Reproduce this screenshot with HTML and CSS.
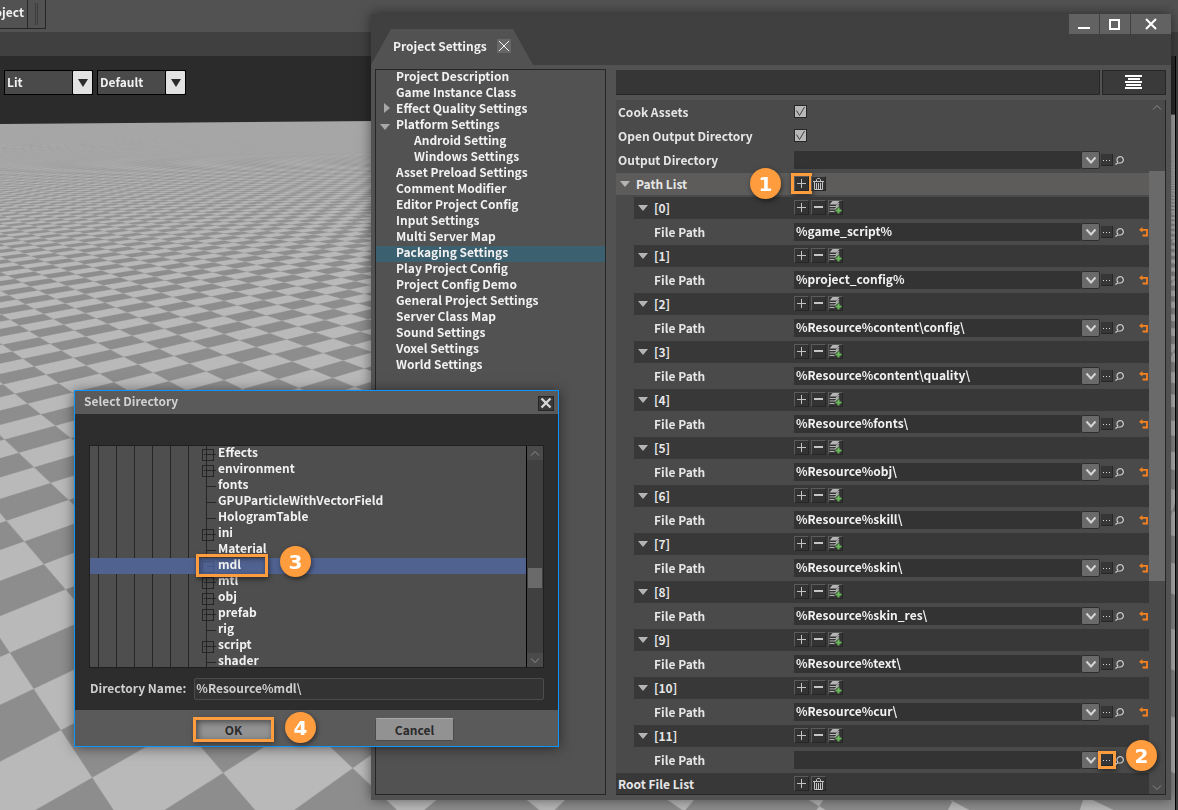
FILE: index.html
```html
<!DOCTYPE html>
<html lang="en">
<head>
  <meta charset="UTF-8">
  <title>Project Settings</title>
  <meta name="viewport" content="width=device-width, initial-scale=1.0">
  <link rel="stylesheet" href="styles.css">
</head>
<body>
  <svg class="sprite" aria-hidden="true">
    <symbol id="i-plus" viewBox="0 0 15 15"><path d="M7.500 3v9M3 7.500h9" stroke="#c4c4c4" fill="none"/></symbol>
    <symbol id="i-minus" viewBox="0 0 15 15"><path d="M3 7h9" stroke="#c4c4c4" stroke-width="2" fill="none"/></symbol>
    <symbol id="i-stack" viewBox="0 0 15 15">
      <path d="M4.500 1h7l-3 3.500H1.500z" fill="#b5b5b5"/>
      <path d="M1.500 6.500h6.500l3-3.500M1.500 9h5.500l4-3.500M1.500 11.500h5" stroke="#b5b5b5" stroke-width="1.200" fill="none"/>
      <path d="M10.500 7.500v6M7.500 10.500h6" stroke="#6cb85c" stroke-width="2" fill="none"/>
    </symbol>
    <symbol id="i-trash" viewBox="0 0 15 15">
      <path d="M2 5.500h11M5.500 5V3.500l1-1h2l1 1V5M3.500 6v7.500h8V6M5.500 7v6M7.500 7v6M9.500 7v6" stroke="#c4c4c4" fill="none"/>
    </symbol>
    <symbol id="i-chevron" viewBox="0 0 18 18"><path d="M4.500 6.500l4.500 5 4.500-5" stroke="#d4d4d4" stroke-width="2" fill="none"/></symbol>
    <symbol id="i-dots" viewBox="0 0 12 12"><path d="M2 6.500h1M5 6.500h1M8 6.500h1" stroke="#d8d8d8" fill="none"/></symbol>
    <symbol id="i-search" viewBox="0 0 10 10"><path d="M3 7.200a3.200 3.200 0 1 1 2.500 .8H2.500L.5 9.500" stroke="#d0d0d0" stroke-width="1.200" fill="none"/></symbol>
    <symbol id="i-reset" viewBox="0 0 9 10"><path d="M2 2.800h6v5.700H3.500" stroke="#f5821f" stroke-width="1.800" fill="none"/><path d="M0 2.800L3.500 0v5.600z" fill="#f5821f"/></symbol>
    <symbol id="i-scroll-up" viewBox="0 0 16 14"><path d="M4 9.500l4-4 4 4" stroke="#8c8c8c" fill="none"/></symbol>
    <symbol id="i-scroll-down" viewBox="0 0 16 14"><path d="M4 5.500l4 4 4-4" stroke="#8c8c8c" fill="none"/></symbol>
  </svg>

  <canvas class="floor" id="floor"></canvas>

  <header class="editor">
    <div class="menu-strip">
      <span class="menu-item">Project</span>
      <span class="grip"></span>
    </div>
    <div class="tab-strip"></div>
    <div class="view-tools">
      <label class="combo">
        <select aria-label="View mode"><option>Lit</option></select>
        <span class="combo-arrow"></span>
      </label>
      <label class="combo">
        <select aria-label="Camera"><option>Default</option></select>
        <span class="combo-arrow"></span>
      </label>
    </div>
  </header>
  <div class="dock-edge"></div>

  <main class="window">
    <div class="titlebar">
      <div class="tab">
        <svg class="tab-shape" viewBox="0 0 162 36" preserveAspectRatio="none"><path d="M0 36L20 0h122l20 36z" fill="#525252"/></svg>
        <span class="tab-title">Project Settings</span>
        <button class="tab-close" aria-label="Close tab"><svg width="14" height="14" viewBox="0 0 14 14"><path d="M2 2l10 10M12 2L2 12" stroke="#f4f4f4"/></svg></button>
      </div>
      <div class="window-buttons">
        <button aria-label="Minimize"><svg width="30" height="20" viewBox="0 0 30 20"><path d="M9 14h12" stroke="#fff" stroke-width="2"/></svg></button>
        <button aria-label="Maximize"><svg width="30" height="20" viewBox="0 0 30 20"><path d="M10 6h9v9h-9z" stroke="#fff" stroke-width="2" fill="none"/></svg></button>
        <button class="wide" aria-label="Close"><svg width="40" height="20" viewBox="0 0 40 20"><path d="M15 5l10 10M25 5L15 15" stroke="#fff" stroke-width="2"/></svg></button>
      </div>
    </div>

    <div class="window-body">
      <ul class="nav">
        <li>Project Description</li>
        <li>Game Instance Class</li>
        <li class="closed">Effect Quality Settings</li>
        <li class="open">Platform Settings</li>
        <li class="child">Android Setting</li>
        <li class="child">Windows Settings</li>
        <li>Asset Preload Settings</li>
        <li>Comment Modifier</li>
        <li>Editor Project Config</li>
        <li>Input Settings</li>
        <li>Multi Server Map</li>
        <li class="selected">Packaging Settings</li>
        <li>Play Project Config</li>
        <li>Project Config Demo</li>
        <li>General Project Settings</li>
        <li>Server Class Map</li>
        <li>Sound Settings</li>
        <li>Voxel Settings</li>
        <li>World Settings</li>
      </ul>

      <section class="details">
        <div class="search-row">
          <input class="search" type="text" aria-label="Search settings">
          <button class="list-btn" aria-label="List options">
            <svg width="18" height="16" viewBox="0 0 18 16"><path d="M0 1h17M3 4h12M0 7h17M1 10h15M0 13h17" stroke="#fff" stroke-width="2"/></svg>
          </button>
        </div>
        <div class="list">
          <div class="rows" id="rows">
            <div class="row">
              <label class="name" for="cook">Cook Assets</label>
              <div class="value"><input class="check" type="checkbox" id="cook" checked></div>
            </div>
            <div class="row">
              <label class="name" for="open-dir">Open Output Directory</label>
              <div class="value"><input class="check" type="checkbox" id="open-dir" checked></div>
            </div>
            <div class="row">
              <label class="name" for="out-dir">Output Directory</label>
              <div class="value">
                <input class="path" type="text" id="out-dir">
                <button class="drop" aria-label="Recent"><svg><use href="#i-chevron"/></svg></button>
                <button class="dots" aria-label="Browse"><svg><use href="#i-dots"/></svg></button>
                <button class="find" aria-label="Find"><svg><use href="#i-search"/></svg></button>
              </div>
            </div>
            <div class="row group">
              <span class="name arrow">Path List</span>
              <div class="value">
                <button class="tool mark" aria-label="Add"><svg><use href="#i-plus"/></svg></button>
                <button class="tool" aria-label="Clear"><svg><use href="#i-trash"/></svg></button>
              </div>
              <span class="badge badge-1">1</span>
            </div>
          </div>
          <div class="scroll">
            <svg class="scroll-arrow"><use href="#i-scroll-up"/></svg>
            <div class="scroll-track"><div class="thumb list-thumb"></div></div>
            <svg class="scroll-arrow"><use href="#i-scroll-down"/></svg>
          </div>
        </div>
      </section>
    </div>
  </main>

  <section class="dialog">
    <div class="dialog-title">
      <span>Select Directory</span>
      <button class="dialog-close" aria-label="Close"><svg width="14" height="14" viewBox="0 0 14 14"><path d="M2.500 2.500l9 9M11.500 2.500l-9 9" stroke="#d8d8d8" stroke-width="2.400"/></svg></button>
    </div>
    <div class="dialog-body">
      <div class="tree">
        <ul class="tree-rows">
          <li class="node">Effects</li>
          <li class="node">environment</li>
          <li>fonts</li>
          <li>GPUParticleWithVectorField</li>
          <li>HologramTable</li>
          <li class="node">ini</li>
          <li>Material</li>
          <li class="node selected">mdl<span class="mark-box"></span><span class="badge badge-3">3</span></li>
          <li class="node">mtl</li>
          <li class="node">obj</li>
          <li class="node">prefab</li>
          <li>rig</li>
          <li class="node">script</li>
          <li>shader</li>
        </ul>
        <div class="scroll">
          <svg class="scroll-arrow"><use href="#i-scroll-up"/></svg>
          <div class="scroll-track"><div class="thumb tree-thumb"></div></div>
          <svg class="scroll-arrow"><use href="#i-scroll-down"/></svg>
        </div>
      </div>
      <div class="dir-row">
        <label for="dir-name">Directory Name:</label>
        <input type="text" id="dir-name" value="%Resource%mdl\">
      </div>
    </div>
    <div class="dialog-footer">
      <button class="btn ok">OK</button>
      <button class="btn">Cancel</button>
      <span class="badge badge-4">4</span>
    </div>
  </section>

  <script src="script.js"></script>
</body>
</html>
```

FILE: styles.css
```css
* {
  box-sizing: border-box;
}
html, body {
  height: 100%;
  margin: 0;
}
body {
  position: relative;
  overflow: hidden;
  background: #2b2b2b;
  color: #f2f2f2;
  font-family: "Noto Sans CJK SC", "Noto Sans", sans-serif;
  font-size: 12px;
  font-weight: 700;
  line-height: 16px;
}
button, input, select {
  font: inherit;
  color: inherit;
  margin: 0;
  padding: 0;
  border: 0;
  border-radius: 0;
}
button {
  display: flex;
  align-items: center;
  justify-content: center;
  flex: none;
}
button svg {
  display: block;
  flex: none;
}
ul {
  list-style: none;
  margin: 0;
  padding: 0;
}
.sprite {
  position: absolute;
  width: 0;
  height: 0;
}
.floor {
  position: absolute;
  top: 0;
  left: 0;
}

/* editor behind the windows */
.editor {
  position: relative;
}
.menu-strip {
  display: flex;
  height: 32px;
  padding-bottom: 3px;
  background: #525252;
}
.menu-item {
  width: 28px;
  padding: 4px 3px 0 0;
  display: flex;
  justify-content: flex-end;
  border-right: 1px solid #262626;
  border-bottom: 1px solid #262626;
}
.grip {
  width: 18px;
  border-right: 1px solid #262626;
  border-bottom: 1px solid #262626;
  background: linear-gradient(90deg, #3c3c3c 1px, transparent 1px 2px, #3c3c3c 2px 3px, transparent 3px) 7px 3px / 10px 22px no-repeat;
}
.tab-strip {
  height: 24px;
  background: #404040;
}
.view-tools {
  display: flex;
  gap: 4px;
  padding: 14px 4px;
}
.combo {
  display: flex;
  height: 25px;
  border: 1px solid #000;
  background: #4a4a4a;
}
.combo select {
  appearance: none;
  width: 68px;
  padding-bottom: 2px;
  padding-left: 2px;
  background: #4a4a4a;
  border-right: 1px solid #000;
}
.combo-arrow {
  display: flex;
  align-items: center;
  justify-content: center;
  width: 19px;
  border-radius: 1px;
  background: #e2e2e2;
}
.combo-arrow::before {
  content: "";
  border: 5px solid transparent;
  border-top: 8px solid #2b2b2b;
  border-bottom: 0;
}
.dock-edge {
  position: absolute;
  top: 56px;
  right: 0;
  bottom: 0;
  width: 3px;
  background: #404040;
  border-left: 1px solid #000;
}

/* settings window */
.window {
  position: absolute;
  top: 14px;
  right: 7px;
  bottom: 10px;
  left: 371px;
  display: flex;
  flex-direction: column;
  background: #525252;
  box-shadow: 0 0 12px rgba(0, 0, 0, 0.5);
}
.titlebar {
  display: flex;
  justify-content: space-between;
  align-items: flex-start;
  height: 51px;
  background: #404040;
}
.tab {
  position: relative;
  display: flex;
  align-items: center;
  align-self: flex-end;
  width: 162px;
  height: 36px;
  padding-bottom: 3px;
  padding-left: 22px;
  gap: 10px;
}
.tab-shape {
  position: absolute;
  inset: 0;
  width: 100%;
  height: 100%;
}
.tab-title, .tab-close {
  position: relative;
}
.tab-close {
  width: 14px;
  height: 14px;
  background: #676767;
}
.window-buttons {
  display: flex;
  gap: 1px;
}
.window-buttons button {
  width: 30px;
  height: 20px;
  background: #626262;
}
.window-buttons .wide {
  width: 40px;
}
.window-body {
  flex: 1;
  min-height: 0;
  display: flex;
  gap: 10px;
  padding: 4px 5px 5px 4px;
}
.nav {
  flex: none;
  width: 231px;
  border: 1px solid #262626;
}
.nav li {
  display: flex;
  align-items: center;
  height: 16px;
  padding-bottom: 4px;
  padding-left: 20px;
}
.nav .child {
  padding-left: 38px;
}
.nav .selected {
  background: #3b6070;
}
.nav .closed::before {
  content: "";
  margin-left: -12px;
  margin-right: 6px;
  border: 5px solid transparent;
  border-left: 6px solid #a8a8a8;
  border-right: 0;
}
.nav .open::before {
  content: "";
  margin-left: -16px;
  margin-right: 6px;
  margin-top: 6px;
  border: 5px solid transparent;
  border-top: 6px solid #a8a8a8;
  border-bottom: 0;
}
.details {
  flex: 1;
  min-width: 0;
  display: flex;
  flex-direction: column;
  gap: 5px;
  padding-top: 1px;
}
.search-row {
  display: flex;
  gap: 2px;
  height: 25px;
}
.search {
  flex: 1;
  min-width: 0;
  background: #363636;
  border-right: 1px solid #262626;
  border-bottom: 1px solid #262626;
}
.list-btn {
  width: 64px;
  background: #3a3a3a;
  border: 1px solid #262626;
}
.list {
  flex: 1;
  min-height: 0;
  display: flex;
  background: #4a4a4a;
  border-right: 1px solid #262626;
  border-bottom: 1px solid #262626;
}
.rows {
  flex: 1;
  min-width: 0;
  padding-top: 1px;
  display: flex;
  flex-direction: column;
  gap: 2px;
}
.row {
  position: relative;
  flex: none;
  display: flex;
  height: 22px;
}
.name {
  flex: none;
  display: flex;
  align-items: center;
  width: 178px;
  padding-left: 2px;
  color: #e6e6e6;
}
.sub {
  margin-left: 18px;
}
.sub .name {
  width: 160px;
  padding-left: 20px;
}
.row .arrow {
  padding-left: 4px;
}
.arrow::before {
  content: "";
  margin-right: 6px;
  border: 5px solid transparent;
  border-top: 6px solid #b4b4b4;
  border-bottom: 0;
}
.group {
  background: #5d5c5a;
}
.index, .root {
  background: #383838;
}
.root {
  height: 21px;
}
.value {
  flex: 1;
  min-width: 0;
  display: flex;
  align-items: center;
  gap: 2px;
  padding-right: 1px;
}
.check {
  appearance: none;
  width: 13px;
  height: 13px;
  margin-bottom: 1px;
  border: 1px solid #262626;
  background: #b8b8b8 url("data:image/svg+xml,%3Csvg xmlns='http://www.w3.org/2000/svg' width='11' height='11'%3E%3Cpath d='M1.500 4.500l3 5 5-8.500' stroke='%23404040' fill='none'/%3E%3C/svg%3E") no-repeat;
}
.path {
  flex: 1;
  min-width: 0;
  height: 18px;
  padding: 0 2px 3px;
  background: #333;
}
.drop {
  width: 19px;
  height: 18px;
  margin-left: -2px;
  background: #6a6a6a;
  border: 1px solid #2e2e2e;
  border-radius: 2px;
}
.drop svg {
  width: 18px;
  height: 18px;
}
.dots {
  width: 12px;
  height: 12px;
  margin-left: -1px;
  background: #363636;
  border-right: 1px solid #262626;
  border-bottom: 1px solid #262626;
}
.dots svg {
  width: 12px;
  height: 12px;
}
.find, .find svg {
  width: 10px;
  height: 10px;
  background: none;
}
.find:last-child {
  margin-right: 23px;
}
.reset {
  width: 9px;
  height: 10px;
  margin-left: 12px;
  background: none;
}
.reset svg {
  width: 9px;
  height: 10px;
}
.tool {
  width: 15px;
  height: 15px;
  margin-bottom: 1px;
  background: #333;
  border: 1px solid #5a5a5a;
  border-right-color: #262626;
  border-bottom-color: #262626;
}
.tool svg {
  width: 15px;
  height: 15px;
}

/* scroll bars */
.scroll {
  flex: none;
  display: flex;
  flex-direction: column;
  width: 16px;
}
.scroll-arrow {
  flex: none;
  width: 16px;
  height: 14px;
}
.scroll-track {
  flex: 1;
}
.thumb {
  background: #6a6a6a;
}
.list-thumb {
  height: 410px;
  margin-top: 57px;
}

/* select directory dialog */
.dialog {
  position: absolute;
  top: 390px;
  left: 74px;
  width: 485px;
  background: #2d2d2d;
  border: 1px solid #0a95ff;
  box-shadow: 0 1px 12px rgba(0, 0, 0, 0.5);
}
.dialog-title {
  display: flex;
  align-items: center;
  justify-content: space-between;
  height: 23px;
  padding: 0 4px 4px 9px;
  background: #5a5a5a;
  color: #d2d2d2;
}
.dialog-close {
  width: 16px;
  height: 15px;
  margin-top: 5px;
  background: #3a3a3a;
  border: 1px solid #262626;
}
.dialog-body {
  padding: 31px 14px 10px;
}
.tree {
  display: flex;
  border: 1px solid #202020;
  background: #4e4e4e;
}
.tree-rows {
  flex: 1;
  height: 221px;
  border-right: 1px solid #000;
  background: repeating-linear-gradient(90deg, transparent 0 8px, #262626 8px 9px, transparent 9px 18px) 0 0 / 126px 100% no-repeat;
}
.tree-rows li {
  position: relative;
  display: flex;
  align-items: center;
  height: 16px;
  padding-bottom: 4px;
  padding-left: 128px;
}
.tree-rows li:last-child {
  height: 13px;
  padding-bottom: 1px;
}
/* horizontal branch */
.tree-rows li::before {
  content: "";
  position: absolute;
  left: 117px;
  top: 8px;
  width: 9px;
  height: 1px;
  background: #262626;
}
.tree-rows .node::after {
  content: "";
  position: absolute;
  left: 112px;
  top: 3px;
  width: 10px;
  height: 10px;
  border: 1px solid #262626;
  background: linear-gradient(#262626, #262626) 1px 4px / 6px 1px no-repeat;
}
.tree-rows .selected {
  background: #506290;
}
.tree-rows .selected::before {
  background: #465784;
}
.tree-rows .selected::after {
  border-color: #465784;
  background: none;
}
.tree .scroll {
  background: #4a4a4a;
}
.tree .scroll-track {
  background: #404040;
}
.tree-thumb {
  height: 20px;
  margin: 108px 1px 0;
}
.dir-row {
  display: flex;
  align-items: center;
  gap: 8px;
  margin-top: 10px;
  color: #cfcfcf;
}
.dir-row label {
  padding-bottom: 2px;
  padding-left: 1px;
}
.dir-row input {
  flex: 1;
  min-width: 0;
  height: 22px;
  padding: 0 1px 3px;
  background: #333;
  border: 1px solid #4c4c4c;
  border-radius: 2px;
}
.dialog-footer {
  position: relative;
  display: flex;
  gap: 102px;
  height: 36px;
  padding: 8px 119px;
  background: #5a5a5a;
}
.btn {
  width: 79px;
  height: 23px;
  color: #2a2a2a;
  background: #929292;
  border: 1px solid #4a4a4a;
  border-top-color: #a8a8a8;
  border-radius: 2px;
}

/* step markers */
.badge {
  position: absolute;
  z-index: 2;
  display: flex;
  align-items: center;
  justify-content: center;
  width: 31px;
  height: 31px;
  border-radius: 50%;
  background: #ff9c3d;
  color: #fff;
  font-family: "DejaVu Sans", sans-serif;
  font-size: 20px;
  font-weight: 700;
  line-height: 20px;
  box-shadow: 1px 2px 5px rgba(0, 0, 0, 0.5);
}
.badge-1 {
  top: -5px;
  left: 134px;
}
.badge-2 {
  top: -9px;
  right: -8px;
}
.badge-3 {
  top: -12px;
  left: 190px;
}
.badge-4 {
  top: 2px;
  left: 210px;
}
.mark, .ok {
  border-radius: 0;
  outline: 3px solid #ff9c3d;
  outline-offset: 0;
  box-shadow: 1px 2px 6px 3px rgba(0, 0, 0, 0.5);
}
.ok {
  outline-offset: -2px;
  box-shadow: 1px 2px 6px rgba(0, 0, 0, 0.5), inset 2px 2px 6px 1px rgba(0, 0, 0, 0.5);
}
.mark-box {
  position: absolute;
  z-index: 1;
  top: -4px;
  left: 106px;
  width: 72px;
  height: 23px;
  border: 3px solid #ff9c3d;
  box-shadow: 1px 2px 5px rgba(0, 0, 0, 0.5), inset 1px 2px 5px rgba(0, 0, 0, 0.4);
}
```

FILE: script.js
```js
const paths = [
  "%game_script%",
  "%project_config%",
  "%Resource%content\\config\\",
  "%Resource%content\\quality\\",
  "%Resource%fonts\\",
  "%Resource%obj\\",
  "%Resource%skill\\",
  "%Resource%skin\\",
  "%Resource%skin_res\\",
  "%Resource%text\\",
  "%Resource%cur\\",
  ""
];

function tool(icon, label) {
  return `<button class="tool" aria-label="${label}"><svg><use href="#i-${icon}"/></svg></button>`;
}

function pathRows(path, i) {
  const last = i === paths.length - 1;
  return `
    <div class="row sub index">
      <span class="name arrow">[${i}]</span>
      <div class="value">${tool("plus", "Add")}${tool("minus", "Remove")}${tool("stack", "Duplicate")}</div>
    </div>
    <div class="row sub">
      <label class="name" for="path-${i}">File Path</label>
      <div class="value">
        <input class="path" type="text" id="path-${i}" value="${path}">
        <button class="drop" aria-label="Recent"><svg><use href="#i-chevron"/></svg></button>
        <button class="dots ${last ? "mark" : ""}" aria-label="Browse"><svg><use href="#i-dots"/></svg></button>
        <button class="find" aria-label="Find"><svg><use href="#i-search"/></svg></button>
        ${last ? "" : `<button class="reset" aria-label="Reset"><svg><use href="#i-reset"/></svg></button>`}
      </div>
      ${last ? `<span class="badge badge-2">2</span>` : ""}
    </div>`;
}

document.getElementById("rows").insertAdjacentHTML("beforeend",
  paths.map(pathRows).join("") + `
    <div class="row root">
      <span class="name">Root File List</span>
      <div class="value">${tool("plus", "Add")}${tool("trash", "Clear")}</div>
    </div>`);

// Checkered floor: origin corner, two vanishing points and the step along each
const origin = [91.7, 777.1];
const vpA = [-355, 100], stepA = -0.0754;
const vpB = [1303, 87], stepB = 0.0809;

function toGrid(x, y) {
  const ax = stepA * (vpA[0] - x), ay = stepA * (vpA[1] - y);
  const bx = stepB * (vpB[0] - x), by = stepB * (vpB[1] - y);
  const px = x - origin[0], py = y - origin[1];
  const det = ax * by - bx * ay;
  return [(px * by - bx * py) / det, (ax * py - px * ay) / det];
}

// box filtered square wave, keeps the distance from flickering
function wave(p, w) {
  const f = v => Math.abs(v - Math.floor(v) - 0.5);
  return 2 * (f((p - w / 2) / 2) - f((p + w / 2) / 2)) / w;
}

function drawFloor() {
  const canvas = document.getElementById("floor");
  const w = canvas.width = window.innerWidth;
  const h = canvas.height = window.innerHeight;
  const ctx = canvas.getContext("2d");
  const img = ctx.createImageData(w, h);
  for (let y = 112; y < h; y++) {
    for (let x = 0; x < w; x++) {
      const cover = Math.min(1, y - 123 + x * 0.008);
      if (cover <= 0) continue;
      const g = toGrid(x, y), gx = toGrid(x + 1, y), gy = toGrid(x, y + 1);
      const wi = Math.abs(gx[0] - g[0]) + Math.abs(gy[0] - g[0]);
      const wj = Math.abs(gx[1] - g[1]) + Math.abs(gy[1] - g[1]);
      const s = wave(g[0], wi) * wave(g[1], wj);
      const near = Math.min(1, (y - 112) / 160);
      const c = 166 - 3 * near + (10 + 12 * near) * s;
      const k = (y * w + x) * 4;
      img.data[k] = c;
      img.data[k + 1] = c;
      img.data[k + 2] = c + 1;
      img.data[k + 3] = 255 * cover;
    }
  }
  ctx.putImageData(img, 0, 0);
}

drawFloor();
window.addEventListener("resize", drawFloor);
```
